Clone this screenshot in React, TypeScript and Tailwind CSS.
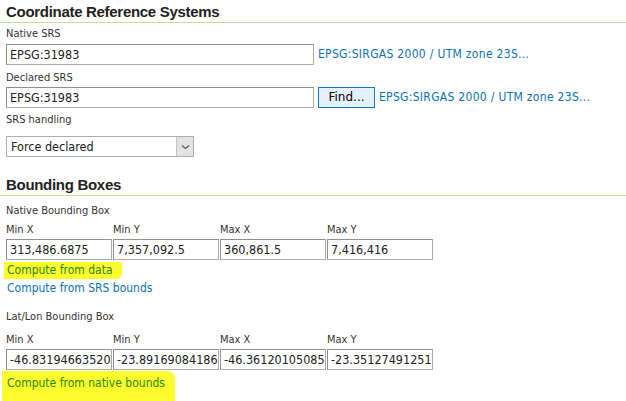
import React from "react";

const condensed = "font-['DejaVu_Sans_Condensed','DejaVu_Sans',sans-serif]";
const label = `text-[11px] leading-[14px] text-[#333] ${condensed}`;
const box = `h-[21px] shrink-0 border border-[#ababab] border-t-[#8f8f8f] border-l-[#8f8f8f] bg-white px-[3px] text-[12.5px] leading-[19px] text-[#222] overflow-hidden whitespace-nowrap ${condensed}`;
const srsLink = `text-[12px] leading-[15px] tracking-[0.3px] text-[#0b72b5] whitespace-nowrap ${condensed}`;
const action = `text-[12px] leading-[15px] text-[#0b72b5] whitespace-nowrap ${condensed}`;

function SectionTitle({ children }: { children: React.ReactNode }) {
  return (
    <h2 className="pl-[6px] text-[15px] leading-[19px] tracking-[-0.3px] font-bold text-[#222] border-b border-[#c3df9c] pb-[1px] font-['Liberation_Sans',sans-serif]">
      {children}
    </h2>
  );
}

function BBox({
  title,
  values,
  gap,
}: {
  title: string;
  values: string[];
  gap: string;
}) {
  const heads = ["Min X", "Min Y", "Max X", "Max Y"];
  return (
    <div className="pl-[6px]">
      <div className={`${label} text-[10px]`}>{title}</div>
      <div className={`flex gap-[1px] ${gap}`}>
        {heads.map((h, i) => (
          <div key={h} className="w-[106px] flex flex-col">
            <div className={`${label} mb-[2px]`}>{h}</div>
            <div className={box}>{values[i]}</div>
          </div>
        ))}
      </div>
    </div>
  );
}

export default function App() {
  return (
    <div className="w-[626px] h-[401px] overflow-hidden bg-white font-['DejaVu_Sans',sans-serif]">
      {/* Coordinate Reference Systems */}
      <div className="pt-[2px]">
        <SectionTitle>Coordinate Reference Systems</SectionTitle>
        <div className="pl-[6px]">
          <div className={`${label} mt-[4px]`}>Native SRS</div>
          <div className="flex items-center gap-[4px] mt-[3px]">
            <div className={`${box} w-[308px]`}>EPSG:31983</div>
            <span className={srsLink}>EPSG:SIRGAS 2000 / UTM zone 23S...</span>
          </div>

          <div className={`${label} mt-[6px]`}>Declared SRS</div>
          <div className="flex items-center mt-[2px]">
            <div className={`${box} w-[308px]`}>EPSG:31983</div>
            <button className="shrink-0 ml-[4px] w-[57px] h-[21px] bg-[#e5f1fb] border border-[#0078d7] text-[12px] leading-[19px] text-black">
              Find...
            </button>
            <span className={`${srsLink} ml-[4px]`}>EPSG:SIRGAS 2000 / UTM zone 23S...</span>
          </div>

          <div className={`${label} mt-[5px]`}>SRS handling</div>
          <div className="mt-[9px] w-[188px] h-[21px] border border-[#abadb3] flex">
            <div className={`flex-1 px-[4px] text-[12.5px] leading-[19px] text-[#222] ${condensed}`}>
              Force declared
            </div>
            <div className="w-[17px] bg-[#e3e3e3] border-l border-[#c4c4c4] flex items-center justify-center">
              <svg width="9" height="6" viewBox="0 0 9 6">
                <path d="M1 1.5 L4.5 4.5 L8 1.5" fill="none" stroke="#555" strokeWidth="1.2" />
              </svg>
            </div>
          </div>
        </div>
      </div>

      {/* Bounding Boxes */}
      <div className="mt-[18px]">
        <SectionTitle>Bounding Boxes</SectionTitle>
        <div className="mt-[8px]">
          <BBox
            title="Native Bounding Box"
            gap="mt-[5px]"
            values={["313,486.6875", "7,357,092.5", "360,861.5", "7,416,416"]}
          />
          <div className="flex pl-[4px] mt-[2px]">
            <span className={`${action} bg-[#fbfb2e] text-[#2d8a10] pl-[3px] pr-[9px] py-[1px] rounded-br-[6px]`}>
              Compute from data
            </span>
          </div>
          <div className={`${action} pl-[7px] mt-[2px]`}>Compute from SRS bounds</div>

          <div className="mt-[14px]">
            <BBox
              title="Lat/Lon Bounding Box"
              gap="mt-[9px]"
              values={["-46.83194663520", "-23.89169084186", "-46.36120105085", "-23.35127491251"]}
            />
          </div>
          <div className="flex pl-[2px] mt-[1px]">
            <span className={`${action} bg-[#fbfb2e] text-[#2d8a10] pl-[5px] pr-[10px] pt-[5px] pb-[10px] rounded-tr-[8px]`}>
              Compute from native bounds
            </span>
          </div>
        </div>
      </div>
    </div>
  );
}
